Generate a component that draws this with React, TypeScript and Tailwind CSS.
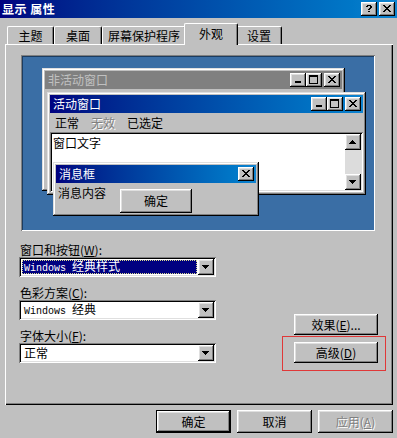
import React from 'react';

const raised =
  'shadow-[inset_-1px_-1px_0_#000,inset_1px_1px_0_#fff,inset_-2px_-2px_0_#808080,inset_2px_2px_0_#dfdfdf]';
const sunken =
  'shadow-[inset_1px_1px_0_#808080,inset_-1px_-1px_0_#fff,inset_2px_2px_0_#000,inset_-2px_-2px_0_#dfdfdf]';
const frame =
  'shadow-[inset_-1px_-1px_0_#000,inset_1px_1px_0_#dfdfdf,inset_-2px_-2px_0_#808080,inset_2px_2px_0_#fff]';
const emboss = 'text-[#808080] [text-shadow:1px_1px_0_#fff]';

const CLOSE = ['xx....xx', '.xx..xx.', '..xxxx..', '...xx...', '..xxxx..', '.xx..xx.', 'xx....xx'];
const MIN = ['xxxxxx', 'xxxxxx'];
const MAX = ['xxxxxxxxx', 'xxxxxxxxx', 'x.......x', 'x.......x', 'x.......x', 'x.......x', 'x.......x', 'x.......x', 'xxxxxxxxx'];
const HELP = ['..xxxx..', '.xx..xx.', '.....xx.', '....xx..', '...xx...', '........', '...xx...'];
const DOWN = ['xxxxxxx', '.xxxxx.', '..xxx..', '...x...'];
const UP = ['...x...', '..xxx..', '.xxxxx.', 'xxxxxxx'];

function Pix({ rows, className }: { rows: string[]; className?: string }) {
  const w = rows[0].length;
  const h = rows.length;
  return (
    <svg width={w} height={h} viewBox={`0 0 ${w} ${h}`} shapeRendering="crispEdges" className={className}>
      {rows.flatMap((r, y) =>
        r.split('').map((c, x) =>
          c === 'x' ? <rect key={`${x}-${y}`} x={x} y={y} width={1} height={1} fill="currentColor" /> : null
        )
      )}
    </svg>
  );
}

function CapButton({ glyph, className }: { glyph: string[]; className?: string }) {
  return (
    <div className={`w-[16px] h-[14px] bg-[#c0c0c0] ${raised} flex justify-center text-black ${className ?? ''}`}>
      <Pix rows={glyph} className={glyph === MIN ? 'mt-[8px] -ml-[1px]' : glyph === MAX ? 'mt-[2px] -ml-[1px]' : 'mt-[3px] -ml-[1px]'} />
    </div>
  );
}

function Caption({ title, active, buttons }: { title: string; active: boolean; buttons: 'full' | 'close' }) {
  return (
    <div
      className={`h-[18px] flex items-center justify-between pl-[3px] pr-[2px] ${
        active ? 'bg-linear-to-r from-[#000080] to-[#1084d0] text-white' : 'bg-[#808080] text-[#c0c0c0]'
      }`}
    >
      <span>{title}</span>
      <div className="flex items-center">
        {buttons === 'full' && (
          <>
            <CapButton glyph={MIN} />
            <CapButton glyph={MAX} />
          </>
        )}
        <CapButton glyph={CLOSE} className={buttons === 'full' ? 'ml-[2px]' : ''} />
      </div>
    </div>
  );
}

function Dropdown({ children, focused }: { children: React.ReactNode; focused?: boolean }) {
  return (
    <div className={`w-[197px] h-[20px] bg-white ${sunken} p-[2px] flex`}>
      <div className="flex-1 p-[1px] flex">
        <div
          className={`flex-1 flex items-center pl-[1px] whitespace-nowrap ${
            focused ? 'bg-[#000080] text-white border border-dotted border-[#d8d890]' : 'border border-transparent'
          }`}
        >
          <span className="leading-[14px]">{children}</span>
        </div>
      </div>
      <div className={`w-[16px] h-[16px] bg-[#c0c0c0] ${raised} flex items-center justify-center`}>
        <Pix rows={DOWN} className="-ml-[1px]" />
      </div>
    </div>
  );
}

function Win({ children }: { children: React.ReactNode }) {
  return <span className="font-['Liberation_Mono',monospace] text-[10px] mr-[6px]">{children}</span>;
}

export default function App() {
  return (
    <div className="w-[397px] h-[438px] bg-[#c0c0c0] overflow-hidden text-[12px] leading-[14px] text-black font-['Noto_Sans_CJK_SC','Noto_Sans',sans-serif]">
      {/* Title bar */}
      <div className="h-[18px] bg-linear-to-r from-[#000080] to-[#1084d0] flex items-center justify-between pl-[2px] pr-[2px]">
        <span className="text-white font-bold tracking-[0.5px]">显示 属性</span>
        <div className="flex gap-[2px]">
          <CapButton glyph={HELP} />
          <CapButton glyph={CLOSE} />
        </div>
      </div>

      {/* Tabs */}
      <div className="h-[26px] flex items-end pl-[7px]">
        {[
          { label: '主题', w: 'w-[47px]' },
          { label: '桌面', w: 'w-[48px]' },
          { label: '屏幕保护程序', w: 'w-[84px]' },
        ].map((t) => (
          <div
            key={t.label}
            className={`${t.w} h-[18px] border-t border-l border-white border-r border-r-black rounded-t-[2px] shadow-[inset_-1px_0_0_#808080] flex items-center justify-center`}
          >
            {t.label}
          </div>
        ))}
        <div className="relative z-10 w-[54px] -mx-[2px] h-[22px] -mb-[1px] bg-[#c0c0c0] border-t border-l border-white border-r border-r-black rounded-t-[2px] shadow-[inset_-1px_0_0_#808080] flex items-start pt-[3px] justify-center">
          外观
        </div>
        <div className="w-[46px] h-[18px] border-t border-l border-white border-r border-r-black rounded-t-[2px] shadow-[inset_-1px_0_0_#808080] flex items-center justify-center">
          设置
        </div>
      </div>

      {/* Panel */}
      <div className="ml-[5px] w-[388px] h-[361px] shadow-[inset_1px_1px_0_#fff,inset_-1px_-1px_0_#000,inset_-2px_-2px_0_#808080] flex flex-col">
        {/* Preview */}
        <div className="ml-[16px] mt-[11px] w-[354px] h-[176px] relative bg-[#3a6ea5] shadow-[inset_1px_1px_0_#808080,inset_-1px_-1px_0_#fff,inset_2px_2px_0_#1c3c60]">
          {/* Inactive window */}
          <div className={`absolute left-[21px] top-[13px] w-[303px] h-[123px] bg-[#c0c0c0] ${frame} p-[3px]`}>
            <Caption title="非活动窗口" active={false} buttons="full" />
          </div>

          {/* Active window */}
          <div className={`absolute left-[26px] top-[37px] w-[319px] h-[103px] bg-[#c0c0c0] ${frame} p-[3px] flex flex-col`}>
            <Caption title="活动窗口" active buttons="full" />
            <div className="h-[19px] flex items-center -ml-[1px]">
              <span className="px-[6px]">正常</span>
              <span className={`px-[6px] ${emboss}`}>无效</span>
              <span className="px-[6px]">已选定</span>
            </div>
            <div className={`flex-1 bg-white ${sunken} p-[2px] flex`}>
              <div className="flex-1 pl-[1px] pt-[2px]">窗口文字</div>
              <div className="w-[16px] flex flex-col bg-[#dcdcdc]">
                <div className={`h-[16px] bg-[#c0c0c0] ${raised} flex items-center justify-center`}>
                  <Pix rows={UP} className="-ml-[1px] -mt-[1px]" />
                </div>
                <div className="flex-1" />
                <div className={`h-[16px] bg-[#c0c0c0] ${raised} flex items-center justify-center`}>
                  <Pix rows={DOWN} className="-ml-[1px]" />
                </div>
              </div>
            </div>
          </div>

          {/* Message box */}
          <div className={`absolute left-[32px] top-[107px] w-[206px] h-[54px] bg-[#c0c0c0] ${frame} p-[3px] flex flex-col`}>
            <Caption title="消息框" active buttons="close" />
            <div className="flex-1 grid grid-cols-[1fr_72px_1fr]">
              <span className="pl-[2px] pt-[3px] whitespace-nowrap">消息内容</span>
              <div className={`mt-[6px] h-[24px] ${raised} flex items-center justify-center`}>确定</div>
              <span />
            </div>
          </div>
        </div>

        {/* Settings */}
        <div className="mt-[12px] ml-[14px] mr-[15px] flex justify-between items-end">
          <div className="flex flex-col">
            <div className="h-[14px] pl-[1px]">
              窗口和按钮(<u>W</u>):
            </div>
            <Dropdown focused>
              <Win>Windows</Win>经典样式
            </Dropdown>
            <div className="h-[14px] pl-[1px] mt-[9px]">
              色彩方案(<u>C</u>):
            </div>
            <Dropdown>
              <Win>Windows</Win>经典
            </Dropdown>
            <div className="h-[14px] pl-[1px] mt-[9px]">
              字体大小(<u>F</u>):
            </div>
            <Dropdown>正常</Dropdown>
          </div>
          <div className="flex flex-col gap-[7px]">
            <div className={`w-[84px] h-[21px] ${raised} flex items-center justify-center`}>
              效果(<u>E</u>)...
            </div>
            <div className="relative">
              <div className={`w-[84px] h-[21px] ${raised} flex items-center justify-center`}>
                高级(<u>D</u>)
              </div>
              <span className="absolute -left-[12px] -top-[6px] -right-[8px] -bottom-[8px] border border-[#e03838] pointer-events-none" />
            </div>
          </div>
        </div>
      </div>

      {/* Dialog buttons */}
      <div className="mt-[5px] flex justify-end gap-[6px] pr-[4px]">
        <div className="w-[75px] h-[23px] border border-black">
          <div className={`w-full h-full ${raised} flex items-center justify-center`}>确定</div>
        </div>
        <div className={`w-[75px] h-[23px] ${raised} flex items-center justify-center`}>取消</div>
        <div className={`w-[75px] h-[23px] ${raised} flex items-center justify-center ${emboss}`}>
          应用(<u>A</u>)
        </div>
      </div>
    </div>
  );
}
